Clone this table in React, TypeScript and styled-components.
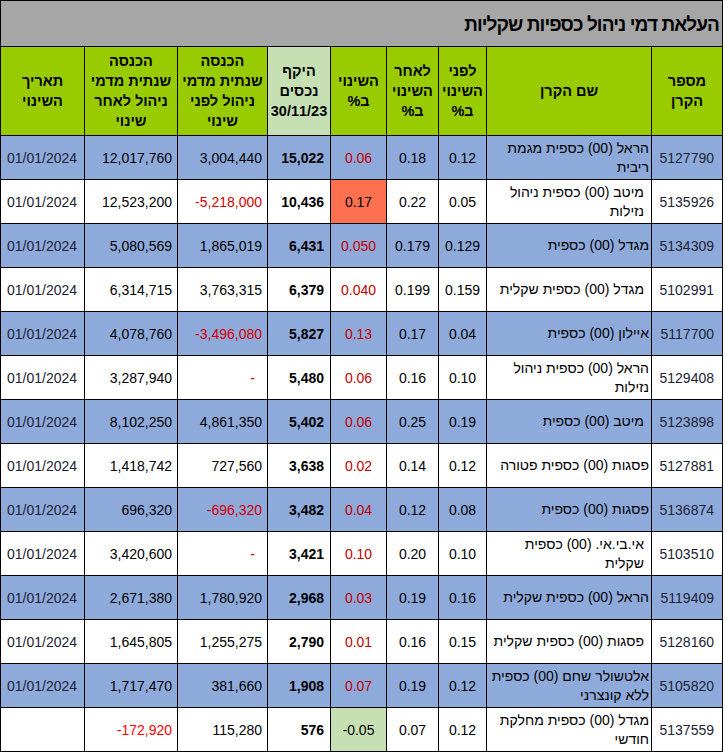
import React from "react";
import styled, { createGlobalStyle } from "styled-components";

const GlobalStyle = createGlobalStyle`
  html, body { margin: 0; padding: 0; background: #ffffff; }
  body { font-family: "Liberation Sans", Arial, sans-serif; }
`;

const Sheet = styled.div`
  width: 723px;
  direction: rtl;
  font-family: "Liberation Sans", Arial, sans-serif;
`;

const TitleBar = styled.div`
  box-sizing: border-box;
  height: 46px;
  background: #a6a6a6;
  border: 1px solid #000;
  border-bottom: none;
  display: flex;
  align-items: center;
  padding: 3px 3px 0 0;
  font-size: 19px;
  letter-spacing: -0.9px;
  font-weight: bold;
  color: #000;
`;

const Table = styled.table`
  width: 723px;
  border-collapse: collapse;
  table-layout: fixed;
`;

const HeadCell = styled.th<{ $light?: boolean }>`
  height: 88px;
  padding: 0 2px;
  border: 1px solid #000;
  background: ${(p) => (p.$light ? "#c6e0b4" : "#99cc00")};
  font-size: 14.5px;
  font-weight: bold;
  line-height: 20px;
  text-align: center;
  vertical-align: middle;
  color: #000;
`;

const Row = styled.tr<{ $blue: boolean }>`
  height: 44px;
  background: ${(p) => (p.$blue ? "#8eaadb" : "#ffffff")};
`;

type Align = "left" | "right" | "center";

const Cell = styled.td<{
  $align: Align;
  $pad?: number;
  $bold?: boolean;
  $color?: string;
  $bg?: string;
}>`
  border: 1px solid #000;
  padding: 0 ${(p) => (p.$align === "right" ? p.$pad ?? 5 : 3)}px 0
    ${(p) => (p.$align === "left" ? p.$pad ?? 5 : 3)}px;
  text-align: ${(p) => p.$align};
  direction: ltr;
  vertical-align: middle;
  font-size: 14px;
  font-weight: ${(p) => (p.$bold ? "bold" : "normal")};
  color: ${(p) => p.$color ?? "#000"};
  background: ${(p) => p.$bg ?? "transparent"};
  white-space: nowrap;
`;

const NameCell = styled.td<{ $indent: boolean }>`
  border: 1px solid #000;
  padding: 0 ${(p) => (p.$indent ? 7 : 2)}px 0 2px;
  text-align: right;
  direction: rtl;
  vertical-align: middle;
  font-size: 14px;
  line-height: 19px;
  color: #000;
  white-space: nowrap;
`;

const cols = [71, 165, 48, 52, 56, 63, 90, 93, 84];

type RowData = {
  id: string;
  name: string[];
  indent?: boolean;
  before: string;
  after: string;
  change: string;
  changeBg?: string;
  assets: string;
  incBefore: string;
  incBeforeRed?: boolean;
  incAfter: string;
  incAfterRed?: boolean;
  date: string;
};

const rows: RowData[] = [
  { id: "5127790", name: ["הראל (00) כספית מגמת", "ריבית"], before: "0.12", after: "0.18", change: "0.06", assets: "15,022", incBefore: "3,004,440", incAfter: "12,017,760", date: "01/01/2024" },
  { id: "5135926", name: ["מיטב (00) כספית ניהול", "נזילות"], indent: true, before: "0.05", after: "0.22", change: "0.17", changeBg: "#ff7050", assets: "10,436", incBefore: "-5,218,000", incBeforeRed: true, incAfter: "12,523,200", date: "01/01/2024" },
  { id: "5134309", name: ["מגדל (00) כספית"], before: "0.129", after: "0.179", change: "0.050", assets: "6,431", incBefore: "1,865,019", incAfter: "5,080,569", date: "01/01/2024" },
  { id: "5102991", name: ["מגדל (00) כספית שקלית"], indent: true, before: "0.159", after: "0.199", change: "0.040", assets: "6,379", incBefore: "3,763,315", incAfter: "6,314,715", date: "01/01/2024" },
  { id: "5117700", name: ["איילון (00) כספית"], before: "0.04", after: "0.17", change: "0.13", assets: "5,827", incBefore: "-3,496,080", incBeforeRed: true, incAfter: "4,078,760", date: "01/01/2024" },
  { id: "5129408", name: ["הראל (00) כספית ניהול", "נזילות"], before: "0.10", after: "0.16", change: "0.06", assets: "5,480", incBefore: "-", incBeforeRed: true, incAfter: "3,287,940", date: "01/01/2024" },
  { id: "5123898", name: ["מיטב (00) כספית"], indent: true, before: "0.19", after: "0.25", change: "0.06", assets: "5,402", incBefore: "4,861,350", incAfter: "8,102,250", date: "01/01/2024" },
  { id: "5127881", name: ["פסגות (00) כספית פטורה"], before: "0.12", after: "0.14", change: "0.02", assets: "3,638", incBefore: "727,560", incAfter: "1,418,742", date: "01/01/2024" },
  { id: "5136874", name: ["פסגות (00) כספית"], before: "0.08", after: "0.12", change: "0.04", assets: "3,482", incBefore: "-696,320", incBeforeRed: true, incAfter: "696,320", date: "01/01/2024" },
  { id: "5103510", name: ["אי.בי.אי. (00) כספית", "שקלית"], indent: true, before: "0.10", after: "0.20", change: "0.10", assets: "3,421", incBefore: "-", incBeforeRed: true, incAfter: "3,420,600", date: "01/01/2024" },
  { id: "5119409", name: ["הראל (00) כספית שקלית"], before: "0.16", after: "0.19", change: "0.03", assets: "2,968", incBefore: "1,780,920", incAfter: "2,671,380", date: "01/01/2024" },
  { id: "5128160", name: ["פסגות (00) כספית שקלית"], indent: true, before: "0.15", after: "0.16", change: "0.01", assets: "2,790", incBefore: "1,255,275", incAfter: "1,645,805", date: "01/01/2024" },
  { id: "5105820", name: ["אלטשולר שחם (00) כספית", "ללא קונצרני"], before: "0.12", after: "0.19", change: "0.07", assets: "1,908", incBefore: "381,660", incAfter: "1,717,470", date: "01/01/2024" },
  { id: "5137559", name: ["מגדל (00) כספית מחלקת", "חודשי"], before: "0.12", after: "0.07", change: "-0.05", changeBg: "#c6e0b4", assets: "576", incBefore: "115,280", incAfter: "-172,920", incAfterRed: true, date: "" },
];

const headers: { lines: string[]; light?: boolean }[] = [
  { lines: ["מספר", "הקרן"] },
  { lines: ["שם הקרן"] },
  { lines: ["לפני", "השינוי", "ב%"] },
  { lines: ["לאחר", "השינוי", "ב%"] },
  { lines: ["השינוי", "ב%"] },
  { lines: ["היקף", "נכסים", "30/11/23"], light: true },
  { lines: ["הכנסה", "שנתית מדמי", "ניהול לפני", "שינוי"] },
  { lines: ["הכנסה", "שנתית מדמי", "ניהול לאחר", "שינוי"] },
  { lines: ["תאריך", "השינוי"] },
];

const Lines: React.FC<{ lines: string[] }> = ({ lines }) => (
  <>
    {lines.map((l, i) => (
      <React.Fragment key={i}>
        {i > 0 && <br />}
        {l}
      </React.Fragment>
    ))}
  </>
);

export default function App() {
  return (
    <>
      <GlobalStyle />
      <Sheet>
        <TitleBar>העלאת דמי ניהול כספיות שקליות</TitleBar>
        <Table>
          <colgroup>
            {cols.map((w, i) => (
              <col key={i} style={{ width: w }} />
            ))}
          </colgroup>
          <thead>
            <tr>
              {headers.map((h, i) => (
                <HeadCell key={i} $light={h.light}>
                  <Lines lines={h.lines} />
                </HeadCell>
              ))}
            </tr>
          </thead>
          <tbody>
            {rows.map((r, i) => (
              <Row key={r.id} $blue={i % 2 === 0}>
                <Cell $align="right" $pad={8} $color="#1c2433">
                  {r.id}
                </Cell>
                <NameCell $indent={!!r.indent}>
                  <Lines lines={r.name} />
                </NameCell>
                <Cell $align="center">{r.before}</Cell>
                <Cell $align="center">{r.after}</Cell>
                <Cell
                  $align="center"
                  $color={r.changeBg ? "#000" : "#c00000"}
                  $bg={r.changeBg}
                >
                  {r.change}
                </Cell>
                <Cell $align="right" $pad={6} $bold>
                  {r.assets}
                </Cell>
                <Cell
                  $align="right"
                  $pad={r.incBefore === "-" ? 12 : 5}
                  $color={r.incBeforeRed ? "#d40000" : "#000"}
                >
                  {r.incBefore}
                </Cell>
                <Cell
                  $align="right"
                  $pad={5}
                  $color={r.incAfterRed ? "#ff0000" : "#000"}
                >
                  {r.incAfter}
                </Cell>
                <Cell $align="left" $pad={6} $color="#1c2433">
                  {r.date}
                </Cell>
              </Row>
            ))}
          </tbody>
        </Table>
      </Sheet>
    </>
  );
}
